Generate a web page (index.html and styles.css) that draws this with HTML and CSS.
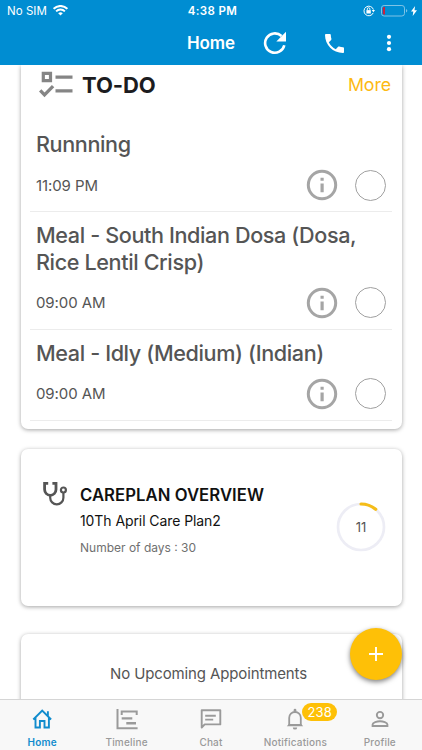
FILE: index.html
```html
<!DOCTYPE html>
<html lang="en">
<head>
<meta charset="utf-8">
<title>Home</title>
<link rel="stylesheet" href="styles.css">
</head>
<body>
<div class="app">
  <header class="header">
    <div class="status">
      <div class="carrier"><span class="sim">No SIM</span>
        <svg width="15" height="11" viewBox="0 0 15 11"><path d="M0.6 3.8a9.8 9.8 0 0 1 13.8 0" fill="none" stroke="#fff" stroke-width="2"/><path d="M3.1 6.3a6.2 6.2 0 0 1 8.8 0" fill="none" stroke="#fff" stroke-width="1.9"/><path d="M7.5 10.6 5.2 8.3a3.3 3.3 0 0 1 4.6 0z" fill="#fff"/></svg>
      </div>
      <div class="clock">4:38 PM</div>
      <div class="power">
        <svg width="12" height="12" viewBox="0 0 12 12"><path d="M10.2 7.9A4.8 4.8 0 1 1 10.4 4.6" fill="none" stroke="#fff"/><path d="M8.7 5.1h3.3L10.4 7.3z" fill="#fff"/><path d="M3.4 5.1h4.4v3.4H3.4z" fill="#fff"/><path d="M4.3 5V4a1.3 1.3 0 0 1 2.6 0v1" fill="none" stroke="#fff" stroke-width=".9"/></svg>
        <svg width="27" height="12" viewBox="0 0 27 12"><rect x=".5" y=".5" width="23" height="10.5" rx="2.6" fill="none" stroke="#7fc3e6"/><path d="M4 2v7.5H3A1.2 1.2 0 0 1 1.8 8.3V3.2A1.2 1.2 0 0 1 3 2z" fill="#c9213f"/><path d="M25 4v3.600q1.300-.6 1.300-1.800T25 4z" fill="#7fc3e6"/></svg>
        <svg width="6" height="10" viewBox="0 0 6 10"><path d="M4.100 0 0 5.600h2.300L1.700 10 6 4.200H3.500z" fill="#fff"/></svg>
      </div>
    </div>
    <div class="toolbar">
      <h1>Home</h1>
      <svg class="refresh" width="24" height="24" viewBox="0 0 24 24"><path d="M21.300 14.200A9.700 9.700 0 1 1 18.500 5" fill="none" stroke="#fff" stroke-width="2.600"/><path d="M23 .8v9.700h-9.700z" fill="#fff"/></svg>
      <svg class="phone" width="19" height="19" viewBox="3 3 18 18"><path d="M6.620 10.790c1.440 2.830 3.760 5.140 6.590 6.590l2.200-2.200c.27-.27.67-.36 1.020-.24 1.120.37 2.330.57 3.570.57.55 0 1 .45 1 1V20c0 .55-.45 1-1 1-9.390 0-17-7.610-17-17 0-.55.45-1 1-1h3.500c.55 0 1 .45 1 1 0 1.250.2 2.450.57 3.570.11.35.03.74-.25 1.020l-2.200 2.200z" fill="#fff"/></svg>
      <svg class="more-menu" width="6" height="18" viewBox="0 0 6 18"><g fill="#fff"><circle cx="3" cy="2.800" r="2.100"/><circle cx="3" cy="9" r="2.100"/><circle cx="3" cy="15.200" r="2.100"/></g></svg>
    </div>
  </header>

  <main class="content">
    <section class="card todo">
      <div class="todo-head">
        <svg width="34" height="27" viewBox="0 0 34 27"><g fill="none" stroke="#858585"><path d="M4.300 2.400h7.200v7.200H4.300z" stroke-width="3.200"/><path d="M16.500 6.200h17M16.500 19.800h17" stroke-width="3.200"/><path d="m1.200 19.300 4.300 4.500 8.600-8.700" stroke-width="3.300"/></g></svg>
        <h2>TO-DO</h2>
        <a class="more">More</a>
      </div>
      <div class="task"><h3>Runnning</h3>
        <div class="meta"><span>11:09 PM</span>
          <svg class="info" viewBox="0 0 32 32"><circle cx="16" cy="16" r="13.700" fill="none" stroke="#a5a5a5" stroke-width="3"/><path d="M14.500 8.700h3.200v3h-3.200zM14.500 14.400h3.200v8.900h-3.200z" fill="#a5a5a5"/></svg><i class="check"></i></div></div>
      <div class="task"><h3>Meal - South Indian Dosa (Dosa,<br>Rice Lentil Crisp)</h3>
        <div class="meta"><span>09:00 AM</span>
          <svg class="info" viewBox="0 0 32 32"><circle cx="16" cy="16" r="13.700" fill="none" stroke="#a5a5a5" stroke-width="3"/><path d="M14.500 8.700h3.200v3h-3.200zM14.500 14.400h3.200v8.900h-3.200z" fill="#a5a5a5"/></svg><i class="check"></i></div></div>
      <div class="task"><h3>Meal - Idly (Medium) (Indian)</h3>
        <div class="meta"><span>09:00 AM</span>
          <svg class="info" viewBox="0 0 32 32"><circle cx="16" cy="16" r="13.700" fill="none" stroke="#a5a5a5" stroke-width="3"/><path d="M14.500 8.700h3.200v3h-3.200zM14.500 14.400h3.200v8.900h-3.200z" fill="#a5a5a5"/></svg><i class="check"></i></div></div>
    </section>

    <section class="card careplan">
      <svg class="steth" width="26" height="26" viewBox="0 0 26 26"><g fill="none" stroke="#555"><path d="M6.200 2.400H2.600v6.200a5.700 5.700 0 0 0 11.400 0V2.400H10.400" stroke-width="2.800"/><path d="M8.200 14.500v2.200a6.600 6.600 0 0 0 13.200 0v-5" stroke-width="2.200"/><circle cx="21.400" cy="9" r="2.500" stroke-width="2.200"/></g></svg>
      <div class="plan">
        <h2>CAREPLAN OVERVIEW</h2>
        <p class="plan-name">10Th April Care Plan2</p>
        <p class="days">Number of days : 30</p>
      </div>
      <div class="ring">
        <svg width="50" height="50" viewBox="0 0 50 50"><circle cx="25" cy="25" r="23" fill="none" stroke="#ededf5" stroke-width="2.700"/><path d="M25 2A23 23 0 0 1 39.700 7.300" fill="none" stroke="#f5bd18" stroke-width="3.200" stroke-linecap="round"/></svg>
        <span>11</span>
      </div>
    </section>

    <section class="card appointments"><p>No Upcoming Appointments</p></section>
  </main>

  <button class="fab" aria-label="Add"><svg width="14" height="14" viewBox="0 0 14 14"><path d="M7 0v14M0 7h14" stroke="#fff" stroke-width="1.900"/></svg></button>

  <nav class="tabs">
    <div class="tab active"><svg width="22" height="22" viewBox="0 0 22 22"><path d="M2.300 11.500 11.200 2.600l8.900 8.900M4.500 9.800v9.700h4.400V13h4.600v6.500h4.400V9.800M16.900 3.200v4.500" fill="none" stroke="currentColor" stroke-width="1.900"/></svg><span>Home</span></div>
    <div class="tab"><svg width="22" height="22" viewBox="0 0 22 22"><g fill="none" stroke="currentColor"><path d="M1.500 1v19.200h20.100M5.700 7V3.500h15V7" stroke-width="2"/><path d="M5.700 10.400h10.600M10.300 15.200h9.700" stroke-width="2.400"/></g></svg><span>Timeline</span></div>
    <div class="tab"><svg width="22" height="22" viewBox="0 0 22 22"><path d="M1.700 19.500V2.200h18.600v14.200H4.700zM5.200 7.700h10.600M5.200 11.600h8" fill="none" stroke="currentColor" stroke-width="1.900" stroke-linejoin="round"/></svg><span>Chat</span></div>
    <div class="tab"><svg width="22" height="22" viewBox="0 0 22 22"><path d="M5.200 17.200V9.800a5.800 5.800 0 0 1 11.600 0v7.400" fill="none" stroke="currentColor" stroke-width="1.800"/><path d="M9.600 3.800V2.200a1.400 1.400 0 0 1 2.800 0v1.600zM2.800 18.200l2-2.200h12.400l2 2.200zM8.800 19.400h4.400a2.200 2.200 0 0 1-4.400 0z" fill="currentColor"/></svg><span>Notifications</span><b class="badge">238</b></div>
    <div class="tab"><svg width="22" height="22" viewBox="0 0 22 22"><circle cx="11" cy="7.100" r="3.200" fill="none" stroke="currentColor" stroke-width="1.900"/><path d="M3.600 18v-1.500c0-2 4.400-3.200 7.400-3.200s7.400 1.200 7.400 3.200V18z" fill="none" stroke="currentColor" stroke-width="1.900"/></svg><span>Profile</span></div>
  </nav>
</div>
</body>
</html>
```
FILE: styles.css
```css
* { box-sizing: border-box; }
body, h1, h2, h3, p { margin: 0; }
body { font-family: Inter, Roboto, sans-serif; background: #fff; color: #555; }
svg { display: block; flex: none; }
span, h1, h2, h3, a, p { white-space: nowrap; }
.app { width: 422px; height: 750px; overflow: hidden; display: flex; flex-direction: column; position: relative; }

.header { flex: none; height: 65px; background: #008dd2; color: #fff; }
.status { height: 21px; display: grid; grid-template-columns: 1fr auto 1fr; align-items: center; padding: 0 5px 0 7px; font-size: 11.5px; }
.carrier { display: flex; align-items: center; gap: 6px; }
.sim { letter-spacing: .05px; }
.clock { font-weight: 600; letter-spacing: .4px; padding-left: 1px; }
.power { display: flex; align-items: center; justify-content: flex-end; gap: 6px; }
.power svg:last-child { margin-left: -3px; }
.toolbar { height: 44px; display: flex; align-items: center; padding-left: 187px; }
.toolbar h1 { width: 48px; font-size: 17px; font-weight: 600; letter-spacing: -.15px; }
.refresh { margin-left: 28px; }
.phone { margin-left: 38px; }
.more-menu { margin-left: 42px; }

.content { flex: 1; min-height: 0; overflow: hidden; padding: 0 20px 0 21px; }
.card { background: #fff; border-radius: 7px; box-shadow: 0 1px 4px rgba(0,0,0,.36); }
.todo { height: 364px; padding: 0 10px 0 9px; border-radius: 0 0 7px 7px; }
.todo-head { height: 56px; display: flex; align-items: flex-start; padding: 6px 1px 0 9px; }
.todo-head h2 { margin-left: 9px; font-size: 22px; line-height: 29px; font-weight: 700; color: #1c1c20; letter-spacing: -.1px; }
.more { margin-left: auto; font-size: 17.8px; line-height: 28px; color: #fdb913; letter-spacing: -.1px; }
.task { padding: 10px 6px 10.5px; border-bottom: 1px solid #ececec; }
.task h3 { font-size: 21.6px; line-height: 26.5px; font-weight: 500; color: #555; letter-spacing: -.38px; }
.meta { display: flex; align-items: center; height: 31px; margin-top: 12px; font-size: 15px; letter-spacing: -.1px; }
.info { width: 32px; height: 32px; margin-left: auto; margin-right: 17px; }
.check { width: 31px; height: 31px; border: 1px solid #a0a0a0; border-radius: 50%; }

.careplan { margin-top: 20px; height: 157px; display: flex; align-items: flex-start; padding: 32px 16px 0 21px; }
.plan { margin-left: 12px; padding-top: 3px; }
.plan h2 { font-size: 16.7px; line-height: 22px; font-weight: 600; color: #111; letter-spacing: .05px; }
.plan-name { margin-top: 5px; font-size: 14px; line-height: 20px; color: #111; letter-spacing: -.08px; }
.days { margin-top: 9px; font-size: 12px; line-height: 16px; color: #707070; }
.ring { margin: 21px 0 0 auto; display: grid; place-items: center; }
.ring > * { grid-area: 1 / 1; }
.ring span { font-size: 13px; }
.appointments { margin-top: 28px; height: 100px; padding-top: 30px; text-align: center; font-size: 15px; line-height: 20px; letter-spacing: -.13px; }
.appointments p { padding-right: 6px; }

.fab { position: absolute; left: 350px; top: 628px; width: 52px; height: 52px; padding: 0; border: 0; border-radius: 50%; background: #fec007; display: grid; place-items: center; box-shadow: 0 2px 5px rgba(0,0,0,.5); }

.tabs { position: relative; flex: none; height: 51px; display: grid; grid-template-columns: repeat(5, 1fr); background: #f8f8f8; border-top: 1px solid #d5d5d5; }
.tab { position: relative; display: flex; flex-direction: column; align-items: center; padding-top: 8px; color: #9a9a9a; font-size: 10px; font-weight: 500; letter-spacing: .2px; }
.tab span { line-height: 14px; margin-top: 5px; }
.active { color: #118ccd; }
.active span { font-weight: 600; }
.badge { position: absolute; left: 49px; top: 3px; width: 35px; height: 18px; border-radius: 9px; background: #fec007; color: #fff; font-weight: 400; font-size: 13px; line-height: 18px; text-align: center; }
```
